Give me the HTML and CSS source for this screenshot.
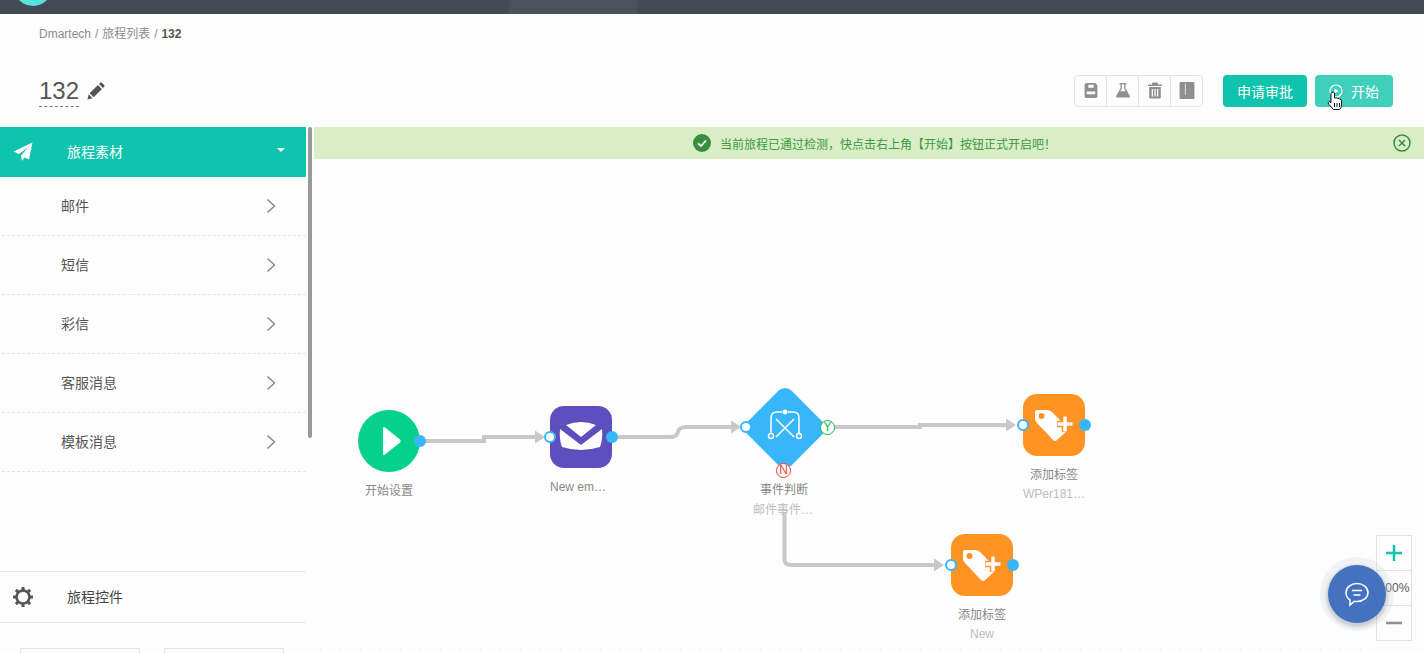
FILE: index.html
```html
<!DOCTYPE html>
<html lang="en">
<head>
    <meta charset="UTF-8">
    <meta name="viewport" content="width=device-width, initial-scale=1.0">
    <title>132</title>
    <link rel="stylesheet" href="styles.css">
</head>
<body>
    <div class="topbar">
        <span class="logo"></span>
        <span class="top_tab"></span>
    </div>

    <div class="crumbs">Dmartech / 旅程列表 / <b>132</b></div>

    <header class="page_head">
        <div class="title_wrap">
            <span class="title">132</span>
            <svg class="pencil" viewBox="0 0 18 18"><path d="M0.5 17.5l1.2-5.2 3.9 4zM2.7 11.2l8.2-8.2 4 4-8.2 8.2zM12 1.9l1.2-1.2q.8-.7 1.600 0l2.400 2.400q.7.8 0 1.600l-1.200 1.200z"/></svg>
        </div>
        <div class="tools">
            <button class="tool"><svg viewBox="0 0 14 16"><path fill-rule="evenodd" d="M3 1h8l2 2v10.500q0 1.500-1.500 1.500h-9Q1 15 1 13.500v-11Q1 1 3 1zM4.500 2.500v3h5v-3zM3 9v2.500h8V9z"/></svg></button>
            <button class="tool"><svg viewBox="0 0 16 16"><path d="M4.500 .5h7v1.300h-1v3.900l4.300 7.800q.7 1.500-1 1.500H2.200q-1.700 0-1-1.500l4.300-7.800V1.800h-1zM6.800 1.800v4.300L5.300 8.700h5.400L9.200 6.100V1.800z" fill-rule="evenodd"/></svg></button>
            <button class="tool"><svg viewBox="0 0 16 16"><path fill-rule="evenodd" d="M6 0h4q1 0 1 1v1h4v1.500H1V2h4V1q0-1 1-1zM2.200 4.500h11.600V15q0 1-1 1H3.200q-1 0-1-1zM4.700 6.500v7.500h1.300V6.500zM7.400 6.500v7.500h1.300V6.500zM10 6.500v7.500h1.300V6.500z"/></svg></button>
            <button class="tool"><svg viewBox="0 0 14 16"><path fill-rule="evenodd" d="M1 0h12q1 0 1 1v14q0 1-1 1H1q-1 0-1-1V1q0-1 1-1zM5 1.500v10.500h.7V1.500z"/></svg></button>
        </div>
        <button class="btn">申请审批</button>
        <button class="btn btn_start">
            <svg class="play_icon" viewBox="0 0 14 14"><circle cx="7" cy="7" r="6" fill="none" stroke="#fff" stroke-width="1.200"/><path d="M5.500 4.500l4 2.500-4 2.500z" fill="#fff"/></svg>
            开始
            <svg class="hand" viewBox="0 0 16 20"><path d="M5 1.500q1.500-1 2.500.5v5l1 0q1.500-.5 2 .5 1.500-.5 2 .7 1.800-.3 2 1.300v4.500q0 3-2 4.500H6.500L2 13.500q-1.800-2 0-3 1 0 2 1.200V2.500q0-.7 1-1z" fill="#fff" stroke="#111" stroke-width="1"/><path d="M7.500 12v4M10 12v4M12.500 12v4" stroke="#111" stroke-width="1"/></svg>
        </button>
    </header>

    <div class="workspace">
        <aside class="sidebar">
            <div class="side_active">
                <svg class="plane" viewBox="0 0 20 20"><path d="M19.500 .5L16 17.500 11.500 15.500 9 19 8 13.500 16 4.500 6 12 .5 9.500z"/></svg>
                <span class="side_label">旅程素材</span>
                <i class="caret"></i>
            </div>
            <ul class="side_list">
                <li><span>邮件</span><svg viewBox="0 0 10 16"><path d="M1.500 1.500L8.500 8l-7 6.500"/></svg></li>
                <li><span>短信</span><svg viewBox="0 0 10 16"><path d="M1.500 1.500L8.500 8l-7 6.500"/></svg></li>
                <li><span>彩信</span><svg viewBox="0 0 10 16"><path d="M1.500 1.500L8.500 8l-7 6.500"/></svg></li>
                <li><span>客服消息</span><svg viewBox="0 0 10 16"><path d="M1.500 1.500L8.500 8l-7 6.500"/></svg></li>
                <li><span>模板消息</span><svg viewBox="0 0 10 16"><path d="M1.500 1.500L8.500 8l-7 6.500"/></svg></li>
            </ul>
            <div class="side_controls">
                <svg class="gear" viewBox="0 0 22 22">
                    <circle cx="11" cy="11" r="6.500" fill="none" stroke="#555" stroke-width="2.600"/>
                    <path d="M11 1v4M11 17v4M1 11h4M17 11h4M3.900 3.900l2.800 2.800M15.300 15.300l2.800 2.800M3.900 18.100l2.800-2.800M15.300 6.700l2.800-2.800" stroke="#555" stroke-width="3"/>
                </svg>
                <span class="side_label">旅程控件</span>
            </div>
            <div class="side_cards">
                <div class="side_card"></div>
                <div class="side_card"></div>
            </div>
        </aside>
        <div class="side_scroll"><span></span></div>

        <section class="stage">
            <div class="alert">
                <svg class="alert_ok" viewBox="0 0 18 18"><circle cx="9" cy="9" r="9" fill="#388e3c"/><path d="M5 9.300l3 2.700 5-5.500" fill="none" stroke="#fff" stroke-width="1.800"/></svg>
                当前旅程已通过检测，快点击右上角【开始】按钮正式开启吧！
                <svg class="alert_close" viewBox="0 0 18 18"><circle cx="9" cy="9" r="8" fill="none" stroke="#388e3c" stroke-width="1.500"/><path d="M6 6l6 6M12 6l-6 6" stroke="#388e3c" stroke-width="1.500"/></svg>
            </div>

            <svg class="links" viewBox="314 127 1110 526">
                <g fill="none" stroke="#c8c8c8" stroke-width="4">
                    <path d="M420 441H484V437H538"/>
                    <path d="M612 437H670Q677 437 678 432Q679 427 686 427H734"/>
                    <path d="M828 427H920V425H1006"/>
                    <path d="M784.500 512V559Q784.500 565 791 565H934"/>
                </g>
                <g fill="#c8c8c8">
                    <path d="M535 430.500L545 437 535 443.500z"/>
                    <path d="M731 420.500L741 427 731 433.500z"/>
                    <path d="M1006 418.500L1016 425 1006 431.500z"/>
                    <path d="M934 558.500L944 565 934 571.500z"/>
                </g>
                <path class="dots" d="M320 649H1370"/>
            </svg>

            <div class="node node_start">
                <div class="tile tile_start">
                    <svg viewBox="0 0 62 62"><path d="M25 18.500q0-2.500 2-1l15 12q1.500 1.500 0 3l-15 12q-2 1.500-2-1z" fill="#fff"/></svg>
                    <span class="port port_out"></span>
                </div>
                <div class="node_name">开始设置</div>
            </div>

            <div class="node node_mail">
                <div class="tile tile_mail">
                    <svg viewBox="0 0 62 62">
                        <path d="M16 19Q31 13 46 19L31 31z" fill="#fff"/>
                        <path d="M10 23L31 39 52 23Q53 33 50 41Q31 47 12 41Q9 33 10 23z" fill="#fff"/>
                    </svg>
                    <span class="port port_in"></span>
                    <span class="port port_out"></span>
                </div>
                <div class="node_name">New em…</div>
            </div>

            <div class="node node_event">
                <div class="tile tile_event">
                    <span class="diamond"></span>
                    <svg viewBox="0 0 86 86">
                        <g fill="none" stroke="#fff" stroke-width="1.500">
                            <path d="M29 48V33Q29 27 35 27H40M57 48V33Q57 27 51 27H46"/>
                            <path d="M34 52L52 34M52 52L34 34"/>
                            <circle cx="29" cy="51" r="2.500"/>
                            <circle cx="57" cy="51" r="2.500"/>
                        </g>
                        <circle cx="43" cy="27" r="2.500" fill="#fff"/>
                    </svg>
                    <span class="port port_in port_in_event"></span>
                    <span class="flag flag_y">Y</span>
                    <span class="flag flag_n">N</span>
                </div>
                <div class="node_name">事件判断</div>
                <div class="node_sub">邮件事件…</div>
            </div>

            <div class="node node_tag_a">
                <div class="tile tile_tag">
                    <svg viewBox="0 0 62 62">
                        <path d="M14 16H24Q27 16 29 18L44 33Q46 35 44 37L34 46Q32 48 30 46L14 29Q12 27 12 25V18Q12 16 14 16z" fill="#fff"/>
                        <circle cx="18.500" cy="22" r="3" fill="#ff9324"/>
                        <path d="M42 22V38M34 30H50" stroke="#ff9324" stroke-width="6.500"/>
                        <path d="M42 22.500V37.500M34.500 30H49.500" stroke="#fff" stroke-width="3.500"/>
                    </svg>
                    <span class="port port_in"></span>
                    <span class="port port_out"></span>
                </div>
                <div class="node_name">添加标签</div>
                <div class="node_sub">WPer181…</div>
            </div>

            <div class="node node_tag_b">
                <div class="tile tile_tag">
                    <svg viewBox="0 0 62 62">
                        <path d="M14 16H24Q27 16 29 18L44 33Q46 35 44 37L34 46Q32 48 30 46L14 29Q12 27 12 25V18Q12 16 14 16z" fill="#fff"/>
                        <circle cx="18.500" cy="22" r="3" fill="#ff9324"/>
                        <path d="M42 22V38M34 30H50" stroke="#ff9324" stroke-width="6.500"/>
                        <path d="M42 22.500V37.500M34.500 30H49.500" stroke="#fff" stroke-width="3.500"/>
                    </svg>
                    <span class="port port_in"></span>
                    <span class="port port_out"></span>
                </div>
                <div class="node_name">添加标签</div>
                <div class="node_sub">New</div>
            </div>

            <div class="zoom_box">
                <div class="zoom_cell zoom_plus"><svg viewBox="0 0 16 16"><path d="M8 0v16M0 8h16"/></svg></div>
                <div class="zoom_cell">100%</div>
                <div class="zoom_cell zoom_minus"><svg viewBox="0 0 16 16"><path d="M0 8h16"/></svg></div>
            </div>

            <button class="chat">
                <svg viewBox="0 0 26 26"><path d="M13 2.500c6 0 11 3.800 11 9s-5 9-11 9h-3l-4 3.500v-5c-2.500-1.600-4-4.300-4-7.500 0-5.200 5-9 11-9z" fill="none" stroke="#fff" stroke-width="1.500"/><path d="M8 9.500h10M9.500 14h7" stroke="#fff" stroke-width="1.500"/></svg>
            </button>
        </section>
    </div>
</body>
</html>
```

FILE: styles.css
```css
* {
    box-sizing: border-box;
}
html, body {
    margin: 0;
    height: 100%;
    overflow: hidden;
}
body {
    display: flex;
    flex-direction: column;
    background: #fdfdfd;
    font-family: 'Liberation Sans', 'Noto Sans CJK SC', sans-serif;
    font-size: 14px;
    color: #555;
}
button {
    font-family: inherit;
    border: 0;
    padding: 0;
}

.topbar {
    position: relative;
    flex: none;
    height: 14px;
    padding-left: 509px;
    background: #434a54;
    overflow: hidden;
}
.logo {
    position: absolute;
    left: 14px;
    top: -31px;
    width: 38px;
    height: 37px;
    border-radius: 50%;
    background: #55e3dc;
}
.top_tab {
    display: block;
    width: 128px;
    height: 14px;
    background: #4b525b;
}

.crumbs {
    flex: none;
    height: 40px;
    padding: 13px 0 0 39px;
    font-size: 12px;
    line-height: 15px;
    word-spacing: .6px;
    color: #8c8c8c;
}
.crumbs b {
    color: #555;
}

.page_head {
    flex: none;
    display: flex;
    align-items: center;
    height: 73px;
    padding: 0 31px 0 39px;
}
.title_wrap {
    display: flex;
    align-items: center;
    gap: 8px;
    margin-right: auto;
}
.title {
    font-size: 24px;
    line-height: 32px;
    height: 32px;
    color: #555;
    border-bottom: 1px dashed #777;
}
.pencil {
    width: 18px;
    height: 18px;
    fill: #555;
}

.tools {
    display: flex;
    height: 32px;
    margin-right: 20px;
    border: 1px solid #e4e6eb;
    border-radius: 4px;
}
.tool {
    display: flex;
    align-items: center;
    justify-content: center;
    width: 32px;
    background: none;
    border-left: 1px solid #e4e6eb;
}
.tool:first-child {
    width: 31px;
    border-left: 0;
}
.tool svg {
    height: 17px;
    width: 16px;
    fill: #8f8f8f;
}

.btn {
    position: relative;
    display: flex;
    align-items: center;
    justify-content: center;
    gap: 8px;
    width: 84px;
    height: 32px;
    border-radius: 4px;
    background: #0fc4ac;
    color: #fff;
    font-size: 14px;
}
.btn_start {
    width: 78px;
    margin-left: 8px;
    background: #3fcfbb;
}
.play_icon {
    width: 14px;
    height: 14px;
}
.hand {
    position: absolute;
    left: 12px;
    top: 16px;
    width: 16px;
    height: 20px;
}

.workspace {
    flex: 1;
    display: flex;
    min-height: 0;
}
.sidebar {
    flex: none;
    display: flex;
    flex-direction: column;
    width: 306px;
    overflow: hidden;
}
.side_active {
    flex: none;
    display: flex;
    align-items: center;
    height: 50px;
    padding: 0 21px 0 13px;
    background: #0fc4ac;
    color: #fff;
}
.side_label {
    margin-bottom: 2px;
}
.plane {
    width: 20px;
    height: 20px;
    fill: #fff;
    margin-right: 34px;
}
.caret {
    margin-left: auto;
    margin-bottom: 4px;
    border: 4px solid transparent;
    border-top: 4px solid #fff;
    border-bottom: 0;
}
.side_list {
    flex: 1;
    margin: 0;
    padding: 0;
    list-style: none;
}
.side_list li {
    display: flex;
    align-items: center;
    justify-content: space-between;
    height: 59px;
    margin-left: 2px;
    padding: 0 30px 0 59px;
    border-bottom: 1px dashed #e6e6e6;
    color: #555;
}
.side_list span {
    margin-bottom: 3px;
}
.side_list svg {
    width: 10px;
    height: 16px;
    fill: none;
    stroke: #808080;
    stroke-width: 1.300;
}
.side_controls {
    flex: none;
    display: flex;
    align-items: center;
    height: 52px;
    padding-left: 12px;
    border-top: 1px solid #e6e8ee;
    border-bottom: 1px solid #e6e8ee;
    color: #444;
}
.gear {
    width: 22px;
    height: 22px;
    margin-right: 33px;
}
.side_cards {
    flex: none;
    display: flex;
    gap: 24px;
    height: 30px;
    padding: 25px 0 0 20px;
}
.side_card {
    width: 120px;
    height: 40px;
    flex: none;
    border: 1px solid #e0e0e0;
}
.side_scroll {
    flex: none;
    width: 8px;
    padding-left: 2px;
}
.side_scroll span {
    display: block;
    width: 4px;
    height: 311px;
    border-radius: 2px;
    background: #999;
}

.stage {
    position: relative;
    flex: 1;
    overflow: hidden;
}
.alert {
    position: relative;
    display: flex;
    align-items: center;
    justify-content: center;
    gap: 9px;
    height: 32px;
    padding-left: 11px;
    background: #d9edc7;
    color: #3d9a44;
    font-size: 12px;
}
.alert_ok {
    width: 18px;
    height: 18px;
}
.alert_close {
    position: absolute;
    right: 13px;
    top: 7px;
    width: 18px;
    height: 18px;
}
.links {
    position: absolute;
    left: 0;
    top: 0;
    width: 1110px;
    height: 526px;
}
.dots {
    fill: none;
    stroke: #e2e2e2;
    stroke-width: 1;
    stroke-dasharray: 1 19;
}

/* flow nodes sit on the free canvas */
.node {
    position: absolute;
    display: flex;
    flex-direction: column;
    align-items: center;
    width: 62px;
    font-size: 12px;
    white-space: nowrap;
}
.node_start { left: 44px; top: 283px; }
.node_mail { left: 236px; top: 279px; }
.node_event { left: 428px; top: 261px; width: 86px; }
.node_tag_a { left: 709px; top: 267px; }
.node_tag_b { left: 637px; top: 407px; }

.tile {
    position: relative;
    flex: none;
    width: 62px;
    height: 62px;
    border-radius: 14px;
}
.tile svg {
    position: relative;
    display: block;
    width: 100%;
    height: 100%;
}
.tile_start {
    border-radius: 50%;
    background: #06d18c;
}
.tile_mail {
    background: #5f4ebd;
}
.tile_tag {
    background: #ff9324;
}
.tile_event {
    width: 86px;
    height: 80px;
}
.tile_event svg {
    height: 86px;
    margin-top: -3px;
}
.diamond {
    position: absolute;
    left: 12px;
    top: 9px;
    width: 62px;
    height: 62px;
    border-radius: 9px;
    background: #38b6fb;
    transform: rotate(45deg);
}
.port {
    position: absolute;
    top: 25px;
    width: 12px;
    height: 12px;
    border-radius: 50%;
    background: #38b6fb;
}
.port_out {
    right: -6px;
}
.port_in {
    left: -6px;
    background: #fff;
    border: 2px solid #38b6fb;
}
.port_in_event {
    left: -2px;
    top: 33px;
}
.flag {
    position: absolute;
    width: 15px;
    height: 15px;
    border-radius: 50%;
    background: #fff;
    font-size: 12px;
    line-height: 13px;
    text-align: center;
}
.flag_y {
    right: -7px;
    top: 32px;
    color: #16b84a;
    border: 1px solid #16b84a;
}
.flag_n {
    left: 34px;
    top: 75px;
    color: #e8412f;
    border: 1px solid #e8412f;
}
.node_name {
    margin-top: 11px;
    line-height: 17px;
    color: #888;
}
.node_mail .node_name {
    margin-right: 6px;
}
.node_event .node_name {
    margin-top: 14px;
    margin-right: 2px;
}
.node_sub {
    margin-top: 2px;
    line-height: 17px;
    color: #bdbdbd;
}
.node_event .node_sub {
    margin-top: 3px;
    margin-right: 4px;
}

.zoom_box {
    position: absolute;
    left: 1062px;
    top: 408px;
    width: 36px;
    border: 1px solid #e0e2ea;
    background: #fdfdfd;
}
.zoom_cell {
    display: flex;
    align-items: center;
    justify-content: center;
    height: 35px;
    border-top: 1px solid #e0e2ea;
    font-size: 12px;
    color: #555;
    white-space: nowrap;
}
.zoom_cell:first-child {
    height: 34px;
    border-top: 0;
}
.zoom_cell svg {
    width: 16px;
    height: 16px;
    fill: none;
    stroke-width: 2.500;
}
.zoom_plus svg {
    stroke: #0fc4ac;
}
.zoom_minus svg {
    stroke: #8f8f8f;
}

.chat {
    position: absolute;
    left: 1014px;
    top: 438px;
    display: flex;
    align-items: center;
    justify-content: center;
    width: 58px;
    height: 58px;
    border-radius: 50%;
    background: #4472c0;
    box-shadow: 0 2px 3px 2px rgba(120, 125, 135, .3), 0 0 0 8px rgba(205, 210, 216, .25);
}
.chat svg {
    width: 26px;
    height: 26px;
}
```
